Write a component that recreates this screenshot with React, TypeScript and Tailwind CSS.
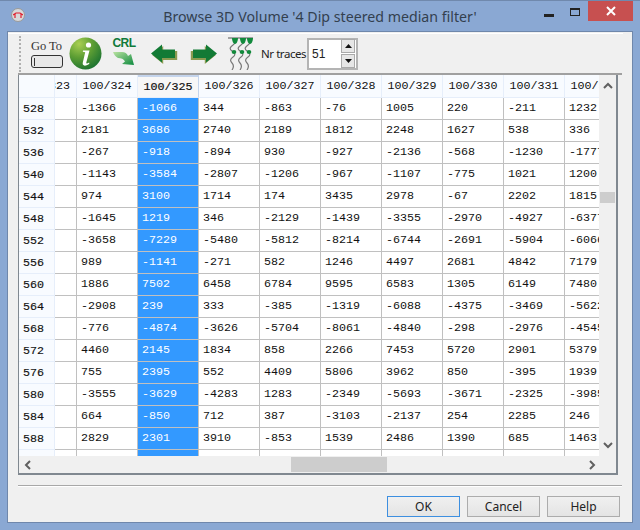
import React from "react";

const cols = ["100/324","100/325","100/326","100/327","100/328","100/329","100/330","100/331","100/332"];
const rows: [string, string[]][] = [
["528",["-1366","-1066","344","-863","-76","1005","220","-211","1232"]],
["532",["2181","3686","2740","2189","1812","2248","1627","538","336"]],
["536",["-267","-918","-894","930","-927","-2136","-568","-1230","-1777"]],
["540",["-1143","-3584","-2807","-1206","-967","-1107","-775","1021","1200"]],
["544",["974","3100","1714","174","3435","2978","-67","2202","1815"]],
["548",["-1645","1219","346","-2129","-1439","-3355","-2970","-4927","-6377"]],
["552",["-3658","-7229","-5480","-5812","-8214","-6744","-2691","-5904","-6066"]],
["556",["989","-1141","-271","582","1246","4497","2681","4842","7179"]],
["560",["1886","7502","6458","6784","9595","6583","1305","6149","7480"]],
["564",["-2908","239","333","-385","-1319","-6088","-4375","-3469","-5622"]],
["568",["-776","-4874","-3626","-5704","-8061","-4840","-298","-2976","-4545"]],
["572",["4460","2145","1834","858","2266","7453","5720","2901","5379"]],
["576",["755","2395","552","4409","5806","3962","850","-395","1939"]],
["580",["-3555","-3629","-4283","1283","-2349","-5693","-3671","-2325","-3985"]],
["584",["664","-850","712","387","-3103","-2137","254","2285","246"]],
["588",["2829","2301","3910","-853","1539","2486","1390","685","1463"]],
["",["","","","","","","","",""]],
];

function Chevron({ d, className }: { d: string; className?: string }) {
  return (
    <svg width="10" height="10" viewBox="0 0 10 10" className={className}>
      <path d={d} fill="none" stroke="#606060" strokeWidth="2" />
    </svg>
  );
}

function InfoIcon() {
  return (
    <svg width="33" height="33" viewBox="0 0 33 33" className="ml-[6px] shrink-0">
      <defs>
        <radialGradient id="ig" cx="0.3" cy="0.2" r="0.95">
          <stop offset="0" stopColor="#a9cf52" />
          <stop offset="0.45" stopColor="#5d9e34" />
          <stop offset="1" stopColor="#0e6a30" />
        </radialGradient>
      </defs>
      <circle cx="16.5" cy="16.5" r="16" fill="url(#ig)" />
      <circle cx="19.5" cy="8" r="2.6" fill="#fff" />
      <path d="M14 13.5h6.5l-3.2 12c-.3 1.2.7 1.4 2.8 0l.3.9c-2.4 2.6-7.6 3.6-6.6-.8l2.4-10.4-2.4-.4z" fill="#fff" />
    </svg>
  );
}

function CrlIcon() {
  return (
    <div className="ml-[10px] w-[24px] h-[33px] flex flex-col items-center shrink-0">
      <span className="text-[12px] leading-[13px] font-bold text-[#0f7a3a] font-['Liberation_Sans',sans-serif] tracking-[-0.5px]">CRL</span>
      <svg width="23" height="15" viewBox="0 0 23 15" className="mt-px">
        <defs>
          <linearGradient id="cg" x1="0" y1="0" x2="1" y2="1">
            <stop offset="0" stopColor="#b9e2a0" />
            <stop offset="1" stopColor="#0d8a3e" />
          </linearGradient>
        </defs>
        <path d="M0 1h9c3 0 5 1.500 6 4l3-2 3 11-12-1 3-2.500C11 8 8 7 5 7 3 6 1 4 0 1z" fill="url(#cg)" />
      </svg>
    </div>
  );
}

function Arrow({ left, className }: { left?: boolean; className?: string }) {
  return (
    <svg width="28" height="20" viewBox="0 0 28 20" className={className}>
      <g transform={left ? "" : "translate(28 0) scale(-1 1)"}>
        <path d="M1 10 L12 1 V6 H26 V15 H12 V19 Z" fill="#8a9a50" transform="translate(1.200 1)" />
        <path d="M1 9.500 L12 0.500 V5.500 H25 V14 H12 V18.500 Z" fill="#127a35" />
      </g>
    </svg>
  );
}

function TracesIcon() {
  const w = "M0 0c3 2 3 4 0 6s-4 4-1 6 4 4 1 6-3 4 -1 6 2 4 0 7";
  return (
    <svg width="28" height="33" viewBox="0 0 28 33" className="ml-[9px] shrink-0">
      <path d="M1 1h25" stroke="#555" strokeWidth="1" />
      {[6, 14, 21].map((x) => (
        <g key={x}>
          <path d={w} transform={`translate(${x} 2)`} fill="none" stroke="#777" strokeWidth="1.200" />
          <path d={`M${x - 1} 1h6c0 3-1.500 6-3 6s-3-3-3-6z`} fill="#118a3c" />
          <ellipse cx={x + 1} cy="15" rx="2.300" ry="2" fill="#128a3c" />
        </g>
      ))}
    </svg>
  );
}

export default function App() {
  const mono = "font-['Liberation_Mono',monospace] text-[11.7px] leading-none";
  return (
    <div className="w-[640px] h-[530px] bg-[#8aa8d3] flex flex-col font-['Liberation_Sans',sans-serif] overflow-hidden border-t border-[#7089ad]">
      <div className="h-[30px] shrink-0 flex items-center relative">
        <div className="absolute left-[11px] top-[7px] w-[14px] h-[14px] rounded-full bg-[#d9d9d9] border border-[#9a9a9a] flex items-center justify-center">
          <svg width="10" height="7" viewBox="0 0 10 7"><path d="M0 3l3-2h4l3 2M2 2v4M8 2v4" fill="none" stroke="#e02030" strokeWidth="1.200" /></svg>
        </div>
        <div className="w-full text-center text-[14.2px] text-[#33404f] font-['Noto_Sans',sans-serif] pt-[1px]">Browse 3D Volume '4 Dip steered median filter'</div>
        <div className="absolute left-[544px] top-[10px] w-[10px] h-[3px] bg-[#222] mt-[3px]" />
        <div className="absolute left-[570px] top-[7px] w-[10px] h-[8px] border border-[#222] border-t-2" />
        <div className="absolute left-[588px] top-0 w-[45px] h-[20px] bg-[#c75050] flex items-center justify-center">
          <svg width="10" height="10" viewBox="0 0 10 10"><path d="M1 1l8 8M9 1l-8 8" stroke="#fff" strokeWidth="2" /></svg>
        </div>
      </div>

      <div className="ml-[7px] w-[626px] h-[492px] shrink-0 border border-[#6f87ab] bg-[#f0f0f0] flex flex-col">
        <div className="h-px bg-[#f0f0f0] shrink-0" />
        <div className="h-px bg-white w-[615px] shrink-0" />
        {/* toolbar */}
        <div className="ml-[10px] w-[604px] h-[41px] shrink-0 border-b-2 border-[#a0a0a0] flex items-center">
          <div className="w-[2px] h-[36px] ml-px border-l-2 border-dotted border-[#b0b0b0] shrink-0" />
          <div className="ml-[9px] w-[33px] flex flex-col shrink-0 items-center">
            <span className="text-[12.5px] leading-[14px] text-[#333] font-['Liberation_Serif',serif] whitespace-nowrap">Go To</span>
            <div className="mt-[2px] w-[32px] h-[13px] rounded-[3px] border-[1.5px] border-[#333] bg-[#e8e8e8] flex items-center pl-[2px]">
              <div className="w-px h-[8px] bg-[#333]" />
            </div>
          </div>
          <InfoIcon />
          <CrlIcon />
          <Arrow left className="ml-[14px] shrink-0" />
          <Arrow className="ml-[12px] shrink-0" />
          <TracesIcon />
          <span className="ml-[6px] w-[44px] text-[11.5px] text-[#222] whitespace-nowrap font-['Noto_Sans',sans-serif] tracking-[-0.45px]">Nr traces</span>
          <div className="ml-[2px] w-[51px] h-[32px] bg-white border-2 border-[#b4b4b4] flex items-center shrink-0">
            <span className="ml-[3px] text-[12px] text-[#222] flex-1">51</span>
            <div className="flex flex-col mr-[1px] gap-px">
              <div className="w-[14px] h-[14px] bg-[#e6e6e6] border border-[#aaa] flex items-center justify-center">
                <svg width="7" height="4" viewBox="0 0 7 4"><path d="M0 4L3.500 0 7 4z" fill="#111" /></svg>
              </div>
              <div className="w-[14px] h-[14px] bg-[#e6e6e6] border border-[#aaa] flex items-center justify-center">
                <svg width="7" height="4" viewBox="0 0 7 4"><path d="M0 0L3.500 4 7 0z" fill="#111" /></svg>
              </div>
            </div>
          </div>
        </div>

        {/* table frame */}
        <div className="ml-[10px] w-[600px] h-[400px] shrink-0 border-r-2 border-b-2 border-l border-[#808890] flex flex-col">
          <div className="flex flex-1 min-h-0">
            <div className="w-[581px] overflow-hidden bg-white h-[381px]">
              {/* header */}
              <div className={`flex h-[23px] ${mono} text-[#111]`}>
                <div className="w-[36px] shrink-0 bg-[#f8fbff] border-r border-[#e6eefa] border-b" />
                <div className="w-[22px] shrink-0 bg-[#f8fbff] border-r border-b border-[#e6eefa] overflow-hidden flex items-center justify-end pr-[6px] pt-[2px]">
                  <span className="whitespace-nowrap">100/323</span>
                </div>
                {cols.map((c, i) => (
                  <div key={c} className={`w-[61px] shrink-0 flex items-center justify-center whitespace-nowrap border-r border-[#e6eefa] border-b pt-[2px] ${i === 1 ? "bg-[#f7f7f7] border-t-2 border-t-[#c4d4ec] border-x-[#c4d4ec] [-webkit-text-stroke:0.2px_#111] pt-0" : "bg-[#f8fbff]"}`}>
                    {c}
                  </div>
                ))}
              </div>
              {rows.map(([r, vals], ri) => (
                <div key={ri} className={`flex h-[22px] ${mono} text-[#111]`}>
                  <div className="w-[36px] shrink-0 bg-[#f8fbff] border-r border-b border-[#e6eefa] flex items-center pl-[4px] pt-[3px] text-[#111] [-webkit-text-stroke:0.15px_#111]">
                    {r}
                  </div>
                  <div className="w-[22px] shrink-0 border-r border-b border-[#c0c0c0]" />
                  {vals.map((v, i) => (
                    <div key={i} className={`w-[61px] shrink-0 overflow-hidden whitespace-nowrap flex items-center pl-[4px] pt-[1px] border-r border-b border-[#c0c0c0] ${i === 1 ? "bg-[#3399ff] text-white" : "bg-white"}`}>
                      {v}
                    </div>
                  ))}
                </div>
              ))}
            </div>
            <div className="w-[17px] flex flex-col items-center py-[6px] bg-[#f0f0f0]">
              <Chevron d="M1 7l4-4 4 4" />
              <div className="w-[15px] h-[11px] bg-[#cdcdcd] mt-[101px] shrink-0" />
              <Chevron d="M1 3l4 4 4-4" className="mt-auto" />
            </div>
          </div>
          <div className="h-[17px] shrink-0 flex items-center bg-[#f0f0f0] pl-[4px]">
            <Chevron d="M7 1L3 5l4 4" />
            <div className="w-[96px] h-[15px] bg-[#cdcdcd] ml-[258px]" />
            <Chevron d="M3 1l4 4-4 4" className="ml-[200px]" />
          </div>
        </div>

        <div className="ml-[10px] mt-[10px] w-[604px] h-[2px] bg-[#a8a8a8] border-b border-white shrink-0" />

        {/* buttons */}
        <div className="mt-[9px] flex gap-[7px] pl-[379px]">
          {["OK", "Cancel", "Help"].map((b, i) => (
            <div key={b} className={`w-[73px] h-[21px] flex items-center justify-center text-[12px] text-[#222] font-['Noto_Sans',sans-serif] border bg-gradient-to-b from-[#f0f0f0] to-[#e4e4e4] ${i === 0 ? "border-[#3d8fe0]" : "border-[#acacac]"}`}>
              {b}
            </div>
          ))}
        </div>
      </div>
    </div>
  );
}
